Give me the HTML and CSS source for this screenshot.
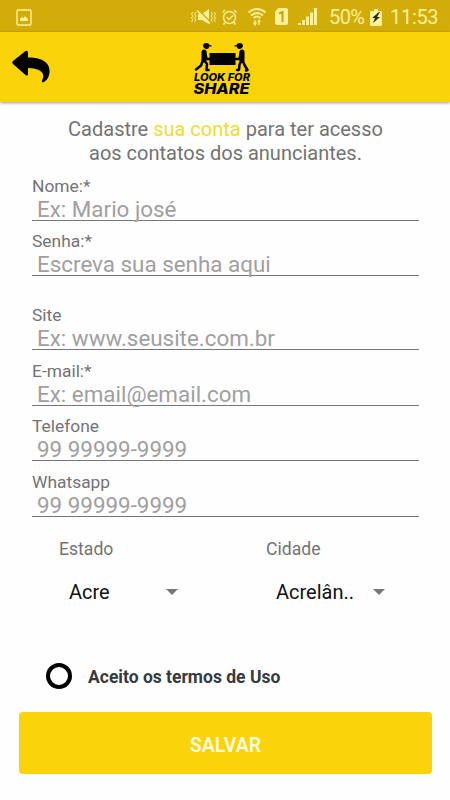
FILE: index.html
```html
<!DOCTYPE html>
<html lang="pt-BR">
<head>
    <meta charset="UTF-8">
    <meta name="viewport" content="width=device-width, initial-scale=1.0">
    <title>Look for Share</title>
    <link rel="stylesheet" href="styles.css">
</head>
<body>
    <div class="status-bar">
        <svg class="icon-picture" width="16" height="17" viewBox="0 0 16 17">
            <rect x="1" y="1" width="14" height="15" rx="1" fill="none" stroke="#fff09a" stroke-width="1.4"/>
            <path d="M4 12V10l2-2 1.500 1.500L9 7l3 3v2z" fill="#fff09a"/>
        </svg>
        <svg class="status-icons" width="126" height="20" viewBox="0 0 126 20" fill="none" stroke="#fff09a">
            <!-- vibrar -->
            <path d="M2 5L.5 7 2 9 .5 11 2 13 .5 15M5 5L3.500 7 5 9 3.500 11 5 13l-1.500 2M20 5l1.500 2L20 9l1.500 2-1.500 2 1.500 2M23 5l1.500 2L23 9l1.500 2-1.500 2 1.500 2" stroke-width="1"/>
            <path d="M7 7h4l7-5v15l-7-4H7z" fill="#fff09a" stroke="none"/>
            <path d="M7 2.500l13 13" stroke="#d2ac09" stroke-width="1.600"/>
            <path d="M6 3.500l13 13" stroke-width="1.400"/>
            <!-- alarme -->
            <circle cx="38.500" cy="10.500" r="6" stroke-width="1.500"/>
            <path d="M35.500 10l2.500 2.500 4-4M31.500 5.500L34 3M45.500 5.500L43 3M34 15.500l-1.500 2M43 15.500l1.500 2" stroke-width="1.400"/>
            <!-- wifi -->
            <path d="M57.500 5.500q8.500-7 17 0M60 8.500q6-4.800 12 0M62.500 11q3.500-2.800 7 0" stroke-width="1.900"/>
            <path d="M64 18v-5M62.500 15.500l1.500 2.500 1.500-2.500M68 13v5M66.500 15l1.500-2 1.500 2" stroke-width="1.200"/>
            <!-- chip -->
            <path d="M87.500 1H95q2 0 2 2v13q0 2-2 2h-9q-2 0-2-2V4.500z" fill="#fff09a" stroke="none"/>
            <path d="M88 6.500L91.500 5v10" stroke="#c9a30b" stroke-width="2"/>
            <!-- sinal -->
            <path d="M108.500 16v2M112.500 13v5M116.500 9.500V18M120.500 5.500V18M124.500 1v17" stroke-width="3"/>
        </svg>
        <span class="battery-level">50%</span>
        <svg class="icon-battery" width="12" height="17" viewBox="0 0 12 17">
            <path d="M1 2h3V0h4v2h3q1 0 1 1v13q0 1-1 1H1q-1 0-1-1V3q0-1 1-1z" fill="#fff09a"/>
            <path d="M9 3L2 9h3l-2 5 7-6H7l3-5z" fill="#2c2817"/>
        </svg>
        <span class="clock">11:53</span>
    </div>

    <div class="header">
        <svg class="back" width="38" height="34" viewBox="0 0 38 34">
            <path d="M1 11L13.500 1Q16 0 16 3V7.500C29 7 37 12 37.500 20C38 26 35 31 31 32.500Q29 32 30.500 29.500C34 22 26 18 16 18V24Q16 26.500 13.500 25L1 14Q-.5 12.500 1 11z"/>
        </svg>
        <svg class="logo" width="60" height="58" viewBox="0 0 60 58">
            <rect x="16.500" y="11" width="26" height="12"/>
            <!-- bonés e cabeças -->
            <path d="M10 4q0-3 3.500-3Q16 1 16.500 3l2 .5v1H16q0 2.500-2.500 2.500T10 4z"/>
            <path d="M50 4q0-3-3.500-3Q44 1 43.500 3l-2 .5v1H44q0 2.500 2.500 2.500T50 4z"/>
            <g fill="none" stroke="#000" stroke-linejoin="round" stroke-linecap="round">
                <path d="M11 10v8M49 10v8" stroke-width="5"/>
                <path d="M12 10l1.500 7H18M48 10l-1.500 7H42" stroke-width="2.600"/>
                <path d="M10 18l-2 5.500-5 4M11 18l3 4-.5 6h2" stroke-width="2.500"/>
                <path d="M48.500 18l-2 4.500-.5 5.500h-2M49.500 18l2 5 3 5-1.500.500" stroke-width="2.500"/>
            </g>
            <text class="logo-top" x="1" y="39" textLength="56" lengthAdjust="spacingAndGlyphs">LOOK FOR</text>
            <text class="logo-bottom" x="0.500" y="51.500" textLength="56" lengthAdjust="spacingAndGlyphs">SHARE</text>
        </svg>
    </div>

    <form class="form">
        <p class="intro">Cadastre <span>sua conta</span> para ter acesso<br>aos contatos dos anunciantes.</p>

        <div class="field">
            <label for="nome">Nome:*</label>
            <input id="nome" type="text" placeholder="Ex: Mario josé">
        </div>
        <div class="field field-senha">
            <label for="senha">Senha:*</label>
            <input id="senha" type="password" placeholder="Escreva sua senha aqui">
        </div>
        <div class="field field-site">
            <label for="site">Site</label>
            <input id="site" type="text" placeholder="Ex: www.seusite.com.br">
        </div>
        <div class="field">
            <label for="email">E-mail:*</label>
            <input id="email" type="email" placeholder="Ex: email@email.com">
        </div>
        <div class="field field-telefone">
            <label for="telefone">Telefone</label>
            <input id="telefone" type="tel" placeholder="99 99999-9999">
        </div>
        <div class="field">
            <label for="whatsapp">Whatsapp</label>
            <input id="whatsapp" type="tel" placeholder="99 99999-9999">
        </div>

        <div class="selects">
            <div class="select">
                <div class="select-label">Estado</div>
                <div class="select-value"><span>Acre</span><i class="arrow"></i></div>
            </div>
            <div class="select">
                <div class="select-label">Cidade</div>
                <div class="select-value"><span>Acrelân..</span><i class="arrow"></i></div>
            </div>
        </div>

        <div class="terms">
            <span class="circle"></span>
            <span class="terms-text">Aceito os termos de Uso</span>
        </div>

        <button type="button" class="save">SALVAR</button>
    </form>
</body>
</html>
```

FILE: styles.css
```css
* {
    box-sizing: border-box;
}

body {
    margin: 0;
    height: 800px;
    overflow: hidden;
    background-color: #fefefe;
    color: #737373;
    font-family: Roboto, sans-serif;
}

.status-bar {
    display: flex;
    align-items: center;
    height: 32px;
    padding: 2px 10px 0 16px;
    background-color: #d2ac09;
    color: #fff09a;
    font-size: 20px;
}

.status-icons {
    flex-shrink: 0;
    margin-left: 159px;
}

.battery-level {
    width: 36px;
    margin-left: 12px;
    letter-spacing: -0.6px;
}

.icon-battery {
    flex-shrink: 0;
    margin-left: 5px;
}

.clock {
    margin-left: 8px;
    letter-spacing: -0.3px;
    white-space: nowrap;
}

.header {
    display: flex;
    align-items: flex-start;
    height: 70px;
    padding: 10px 12px 0;
    background-color: #fbd309;
    box-shadow: 0 1px 3px rgba(0, 0, 0, 0.4);
}

.back {
    margin-top: 8px;
}

.logo {
    margin-left: 143px;
}

.logo text {
    font-family: Inter, sans-serif;
    font-style: italic;
    font-weight: 800;
}

.logo-top {
    font-size: 10px;
}

.logo-bottom {
    font-size: 14.5px;
}

.form {
    padding: 16px 18px 0 19px;
}

.intro {
    margin: 0 0 11px;
    font-size: 20px;
    line-height: 23.5px;
    text-align: center;
}

.intro span {
    color: #f0dc32;
}

.field {
    height: 45px;
    margin: 0 13px 10px 13px;
}

.field-senha {
    margin-bottom: 29px;
}

.field-site,
.field-telefone {
    margin-bottom: 11px;
}

.field label {
    display: block;
    height: 20px;
    font-size: 17.4px;
    line-height: 20px;
}

/* a linha fica atrás do texto */
.field input {
    display: block;
    width: 100%;
    height: 29px;
    padding: 0 0 3px 5px;
    border: none;
    background: linear-gradient(#77777a, #77777a) 0 24px / 100% 1px no-repeat;
    font-family: inherit;
    font-size: 22.4px;
    outline: none;
}

.field input::placeholder {
    color: #a0a0a0;
    opacity: 1;
}

.selects {
    display: flex;
    margin: 22px 0 0 40px;
}

.select {
    flex: none;
    width: 207px;
}

.select + .select {
    width: 119px;
}

.select-label {
    font-size: 17.6px;
    line-height: 20px;
}

.select-value {
    display: flex;
    align-items: center;
    justify-content: space-between;
    width: 119px;
    margin-top: 21px;
    padding-left: 10px;
    color: #111;
    font-size: 20px;
    line-height: 24px;
}

.arrow {
    border: 6px solid transparent;
    border-top-color: #777;
    border-bottom: none;
}

.terms {
    display: flex;
    align-items: center;
    margin: 59px 0 23px 27px;
}

.circle {
    width: 26px;
    height: 26px;
    border: 4px solid #000;
    border-radius: 50%;
}

.terms-text {
    margin-left: 16px;
    padding-top: 2px;
    color: #343a40;
    font-size: 17.5px;
    font-weight: bold;
}

.save {
    display: block;
    width: 100%;
    height: 62px;
    padding: 4px 0 0;
    border: none;
    border-radius: 4px;
    background-color: #fbd309;
    color: #fffbe0;
    font-family: inherit;
    font-size: 19.6px;
    font-weight: 600;
}
```
